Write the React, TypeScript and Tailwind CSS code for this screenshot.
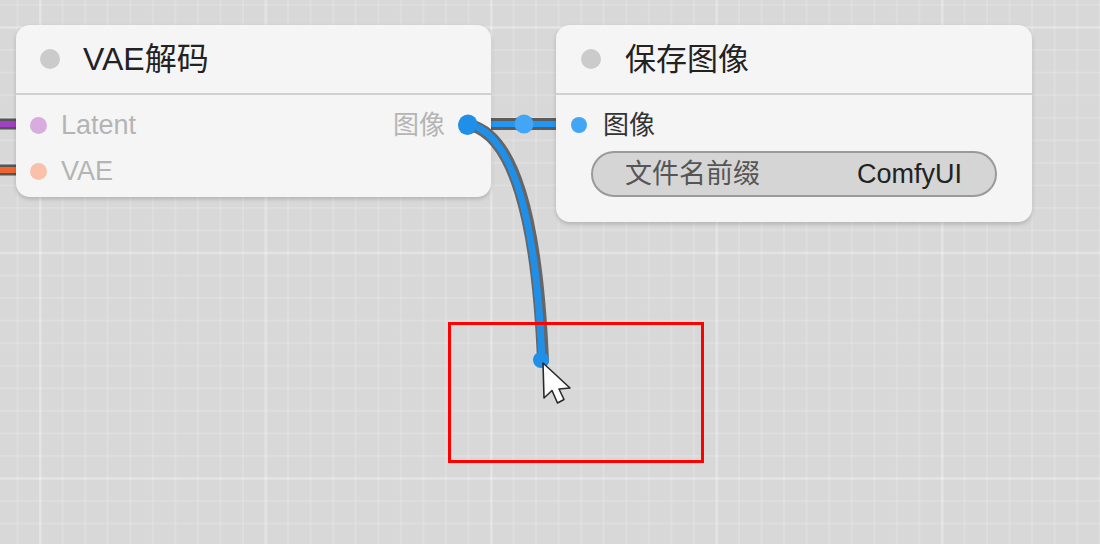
import React from "react";

const font = "font-['Liberation_Sans','Noto_Sans_CJK_SC',sans-serif]";

function Cursor() {
  return (
    <svg className="absolute left-[541px] top-[361px]" width="32" height="46" viewBox="-2 -2 32 46">
      <path
        d="M0 0 L1 35 L9 27.5 L14.5 40 L21 36.5 L16 26 L27 25 Z"
        fill="#ffffff"
        stroke="#2a2a2a"
        strokeWidth="1.6"
        strokeLinejoin="round"
      />
    </svg>
  );
}

export default function App() {
  return (
    <div
      className={`relative w-[1100px] h-[544px] overflow-hidden bg-[#d8d8d8] ${font} bg-[linear-gradient(to_right,rgba(255,255,255,0.18)_3px,transparent_3px),linear-gradient(to_bottom,rgba(255,255,255,0.18)_3px,transparent_3px),linear-gradient(to_right,rgba(255,255,255,0.14)_2px,transparent_2px),linear-gradient(to_bottom,rgba(255,255,255,0.14)_2px,transparent_2px)] bg-[size:225.5px_225.5px,225.5px_225.5px,22.55px_22.55px,22.55px_22.55px] bg-[position:39px_26px,39px_26px,16.5px_4px,16.5px_4px]`}
    >
      {/* links under nodes */}
      <svg className="absolute inset-0" width="1100" height="544">
        <line x1="-5" y1="124" x2="22" y2="124" stroke="#555" strokeWidth="11" />
        <line x1="-5" y1="124" x2="22" y2="124" stroke="#a23fc4" strokeWidth="6" />
        <line x1="-5" y1="170" x2="22" y2="170" stroke="#555" strokeWidth="11" />
        <line x1="-5" y1="170" x2="22" y2="170" stroke="#f0652d" strokeWidth="6" />
        <line x1="480" y1="124" x2="565" y2="124" stroke="#5c5c5c" strokeWidth="12" />
        <line x1="480" y1="124" x2="565" y2="124" stroke="#2196f3" strokeWidth="6" />
        <circle cx="524" cy="124" r="9.5" fill="#42a5f5" />
      </svg>

      {/* Node 1: VAE解码 */}
      <div className="absolute left-[16px] top-[25px] w-[475px] h-[172px] rounded-[14px] bg-[#f5f5f5] shadow-[0_2px_4px_rgba(0,0,0,0.18)] flex flex-col">
        <div className="h-[68px] flex items-center pl-[24px]">
          <div className="w-[20px] h-[20px] rounded-full bg-[#cbcbcb]" />
          <div className="ml-[23px] text-[32px] text-[#222] leading-none">VAE解码</div>
        </div>
        <div className="h-[2px] bg-[#d0d0d0]" />
        <div className="pt-[7px] flex flex-col">
          <div className="h-[46px] flex items-center pl-[14px] pr-[14px]">
            <div className="w-[17px] h-[17px] rounded-full bg-[#d8acdf]" />
            <div className="ml-[14px] text-[27px] text-[#b4b4b4] leading-none">Latent</div>
            <div className="flex-1" />
            <div className="text-[26px] text-[#b4b4b4] leading-none">图像</div>
            <div className="ml-[13px] w-[19px] h-[19px] rounded-full bg-[#1f8fe8]" />
          </div>
          <div className="h-[46px] flex items-center pl-[14px]">
            <div className="w-[17px] h-[17px] rounded-full bg-[#f9c1aa]" />
            <div className="ml-[14px] text-[27px] text-[#b4b4b4] leading-none">VAE</div>
          </div>
        </div>
      </div>

      {/* Node 2: 保存图像 */}
      <div className="absolute left-[556px] top-[25px] w-[476px] h-[197px] rounded-[14px] bg-[#f5f5f5] shadow-[0_2px_4px_rgba(0,0,0,0.18)] flex flex-col">
        <div className="h-[68px] flex items-center pl-[25px]">
          <div className="w-[20px] h-[20px] rounded-full bg-[#cbcbcb]" />
          <div className="ml-[24px] text-[31px] text-[#222] leading-none">保存图像</div>
        </div>
        <div className="h-[2px] bg-[#d0d0d0]" />
        <div className="pt-[7px] flex flex-col">
          <div className="h-[46px] flex items-center pl-[15px]">
            <div className="w-[16px] h-[16px] rounded-full bg-[#42a5f5]" />
            <div className="ml-[16px] text-[26px] text-[#333] leading-none">图像</div>
          </div>
          <div className="mt-[3px] mx-[35px] h-[46px] rounded-full bg-[#d5d5d5] border-2 border-[#9a9a9a] flex items-center justify-between pl-[32px] pr-[33px]">
            <div className="text-[27px] text-[#555] leading-none">文件名前缀</div>
            <div className="text-[27px] text-[#222] leading-none">ComfyUI</div>
          </div>
        </div>
      </div>

      {/* dragging link */}
      <svg className="absolute inset-0" width="1100" height="544">
        <path d="M470 125 Q534 141 543 361" fill="none" stroke="#666" strokeWidth="12" strokeLinecap="round" />
        <path d="M469 124 Q533 140 542 360" fill="none" stroke="#1f8fe8" strokeWidth="7" strokeLinecap="round" />
        <circle cx="468" cy="124" r="9.5" fill="#1f8fe8" />
        <circle cx="541" cy="360" r="8" fill="#1f8fe8" />
      </svg>

      {/* red annotation box */}
      <div className="absolute left-[448px] top-[322px] w-[256px] h-[141px] border-[3px] border-[#ff0000]" />

      <Cursor />
    </div>
  );
}
